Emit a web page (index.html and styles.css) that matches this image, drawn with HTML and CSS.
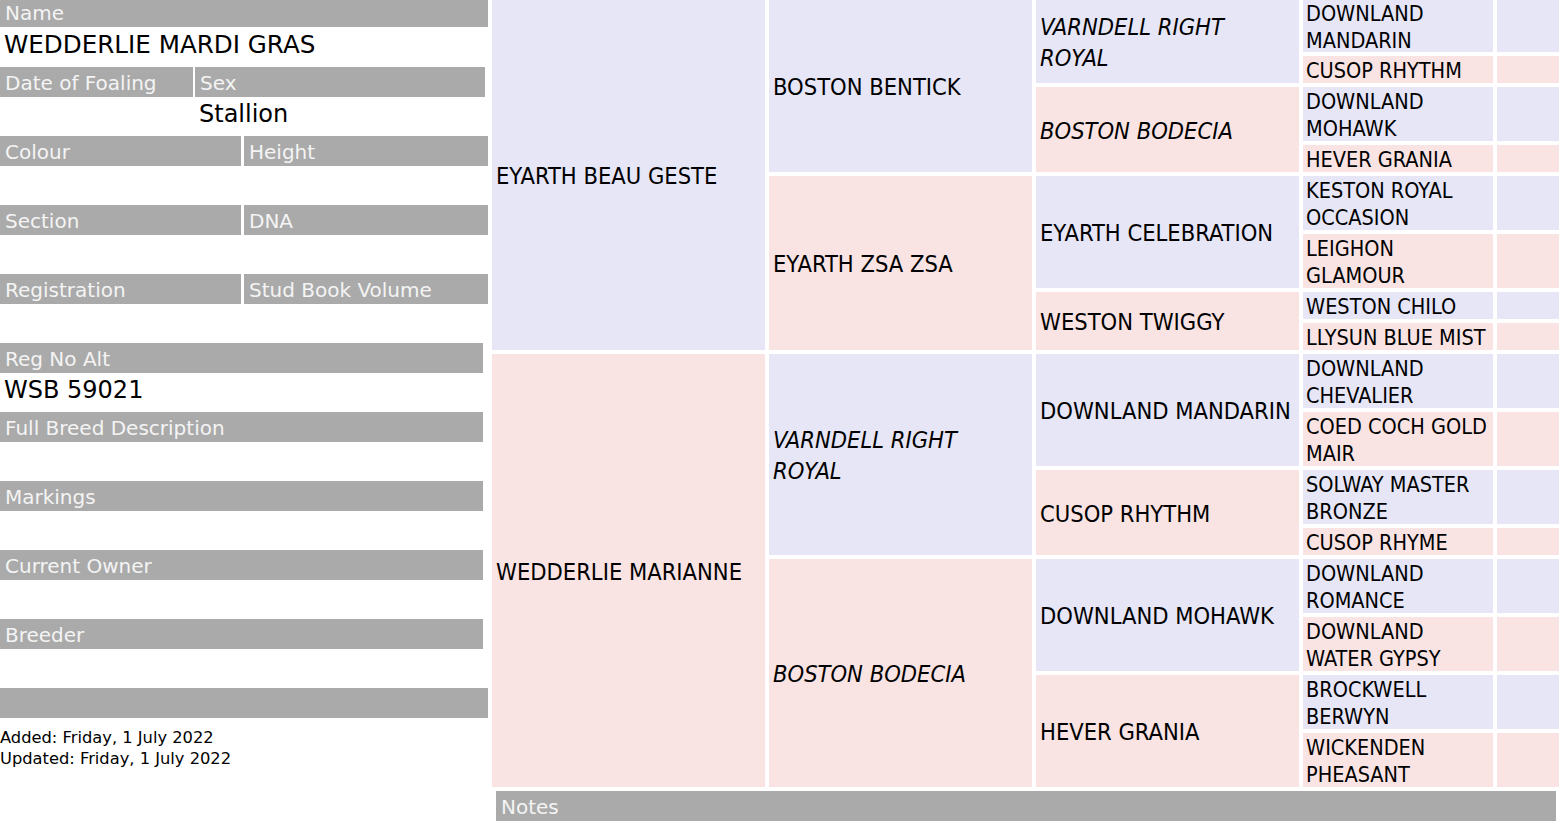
FILE: index.html
```html
<!DOCTYPE html>
<html lang="en">
<head>
<meta charset="utf-8">
<title>WEDDERLIE MARDI GRAS</title>
<link rel="stylesheet" href="styles.css">
</head>
<body>
<div class="page">
  <section class="info">
    <div class="bar bar-first w488">Name</div>
    <div class="val val-first">WEDDERLIE MARDI GRAS</div>

    <div class="pair gap2">
      <div class="bar w193">Date of Foaling</div>
      <div class="bar w290">Sex</div>
    </div>
    <div class="val pair gap2">
      <div class="w193"></div>
      <div class="w290">Stallion</div>
    </div>

    <div class="pair gap3">
      <div class="bar w241">Colour</div>
      <div class="bar w244">Height</div>
    </div>
    <div class="val"></div>

    <div class="pair gap3">
      <div class="bar w241">Section</div>
      <div class="bar w244">DNA</div>
    </div>
    <div class="val"></div>

    <div class="pair gap3">
      <div class="bar w241">Registration</div>
      <div class="bar w244">Stud Book Volume</div>
    </div>
    <div class="val"></div>

    <div class="bar w483">Reg No Alt</div>
    <div class="val">WSB 59021</div>

    <div class="bar w483">Full Breed Description</div>
    <div class="val"></div>

    <div class="bar w483">Markings</div>
    <div class="val"></div>

    <div class="bar w483">Current Owner</div>
    <div class="val"></div>

    <div class="bar w483">Breeder</div>
    <div class="val"></div>

    <div class="bar w488"></div>
    <div class="dates">
      <div>Added: Friday, 1 July 2022</div>
      <div>Updated: Friday, 1 July 2022</div>
    </div>
  </section>

  <section class="tree">
    <div class="pedigree">
      <div class="p g1 blue">EYARTH BEAU GESTE</div>
      <div class="p g1 pink">WEDDERLIE MARIANNE</div>

      <div class="p g2 blue">BOSTON BENTICK</div>
      <div class="p g2 pink">EYARTH ZSA ZSA</div>
      <div class="p g2 blue it">VARNDELL RIGHT ROYAL</div>
      <div class="p g2 pink it">BOSTON BODECIA</div>

      <div class="p g3 blue it">VARNDELL RIGHT ROYAL</div>
      <div class="p g3 pink it">BOSTON BODECIA</div>
      <div class="p g3 blue">EYARTH CELEBRATION</div>
      <div class="p g3 pink">WESTON TWIGGY</div>
      <div class="p g3 blue">DOWNLAND MANDARIN</div>
      <div class="p g3 pink">CUSOP RHYTHM</div>
      <div class="p g3 blue">DOWNLAND MOHAWK</div>
      <div class="p g3 pink">HEVER GRANIA</div>

      <div class="p g4 blue">DOWNLAND MANDARIN</div>
      <div class="p g4 pink">CUSOP RHYTHM</div>
      <div class="p g4 blue">DOWNLAND MOHAWK</div>
      <div class="p g4 pink">HEVER GRANIA</div>
      <div class="p g4 blue">KESTON ROYAL OCCASION</div>
      <div class="p g4 pink">LEIGHON GLAMOUR</div>
      <div class="p g4 blue">WESTON CHILO</div>
      <div class="p g4 pink">LLYSUN BLUE MIST</div>
      <div class="p g4 blue">DOWNLAND CHEVALIER</div>
      <div class="p g4 pink">COED COCH GOLD MAIR</div>
      <div class="p g4 blue">SOLWAY MASTER BRONZE</div>
      <div class="p g4 pink">CUSOP RHYME</div>
      <div class="p g4 blue">DOWNLAND ROMANCE</div>
      <div class="p g4 pink">DOWNLAND WATER GYPSY</div>
      <div class="p g4 blue">BROCKWELL BERWYN</div>
      <div class="p g4 pink">WICKENDEN PHEASANT</div>

      <div class="p g5 blue"></div>
      <div class="p g5 pink"></div>
      <div class="p g5 blue"></div>
      <div class="p g5 pink"></div>
      <div class="p g5 blue"></div>
      <div class="p g5 pink"></div>
      <div class="p g5 blue"></div>
      <div class="p g5 pink"></div>
      <div class="p g5 blue"></div>
      <div class="p g5 pink"></div>
      <div class="p g5 blue"></div>
      <div class="p g5 pink"></div>
      <div class="p g5 blue"></div>
      <div class="p g5 pink"></div>
      <div class="p g5 blue"></div>
      <div class="p g5 pink"></div>
    </div>
    <div class="bar notes">Notes</div>
  </section>
</div>
</body>
</html>
```

FILE: styles.css
```css
html, body {
  margin: 0;
  padding: 0;
  background: #ffffff;
}

body {
  font-family: "DejaVu Sans", Verdana, sans-serif;
  color: #000000;
}

.page {
  display: flex;
  align-items: flex-start;
}

/* ---------- left info panel ---------- */
.info {
  width: 488px;
  flex: none;
}

.bar {
  box-sizing: border-box;
  height: 30px;
  padding: 5px 0 0 5px;
  background: #aaaaaa;
  color: #f4f4f4;
  font-size: 20px;
  line-height: 23px;
  white-space: nowrap;
  overflow: hidden;
}

.bar-first {
  height: 27px;
  padding-top: 2px;
}

.w488 { width: 488px; }
.w483 { width: 483px; }
.w193 { width: 193px; flex: none; }
.w290 { width: 290px; flex: none; }
.w241 { width: 241px; flex: none; }
.w244 { width: 244px; flex: none; }

.pair {
  display: flex;
}

.gap2 { gap: 2px; }
.gap3 { gap: 3px; }

.val {
  box-sizing: border-box;
  height: 39px;
  padding: 3px 0 0 4px;
  font-size: 24px;
  line-height: 28px;
  white-space: nowrap;
}

.val-first {
  height: 40px;
  padding-top: 4px;
  font-size: 24.6px;
}

.val.pair {
  padding-left: 0;
}

.val.pair > div {
  box-sizing: border-box;
  padding-left: 4px;
}

.dates {
  padding-top: 9px;
  font-size: 16.3px;
  line-height: 21px;
}

/* ---------- pedigree ---------- */
.tree {
  margin-left: 4px;
  flex: none;
}

.pedigree {
  display: grid;
  grid-template-columns: 273px 263px 263px 190px 62px;
  grid-template-rows: 52px 27px 54px 27px 54px 54px 27px 27px 54px 54px 54px 27px 54px 54px 54px 54px;
  grid-auto-flow: column;
  gap: 4px;
  font-family: "DejaVu Sans Condensed", "DejaVu Sans", sans-serif;
  font-stretch: condensed;
}

.p {
  box-sizing: border-box;
  display: flex;
  align-items: center;
  padding: 3px 4px 0 4px;
  font-size: 23.5px;
  line-height: 1.3;
}

.blue { background: #e6e6f7; }
.pink { background: #f9e4e3; }

.it { font-style: italic; }

.g1 { grid-row: span 8; }
.g2 { grid-row: span 4; }
.g3 { grid-row: span 2; }
.g4 {
  font-size: 21.5px;
  line-height: 27px;
  padding: 2px 3px 0 3px;
}

.notes {
  width: 1060px;
  margin: 4px 0 0 4px;
}
```
